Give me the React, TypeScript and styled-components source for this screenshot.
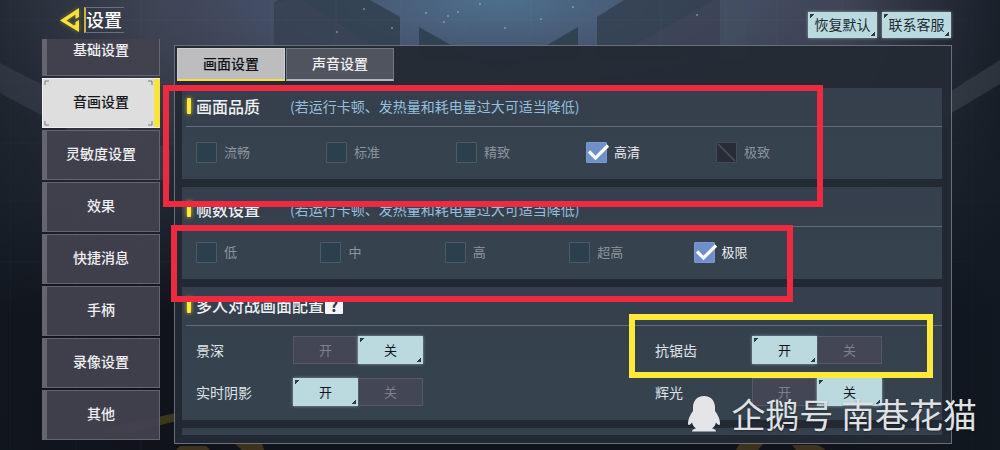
import React, { useState } from "react";
import styled, { createGlobalStyle, css } from "styled-components";

const GlobalStyle = createGlobalStyle`
  * { box-sizing: border-box; }
  body {
    margin: 0;
    background: #10131a;
    font-family: "Noto Sans CJK SC", "Noto Sans", sans-serif;
    color: #eef0f3;
  }
  button { font-family: inherit; cursor: pointer; }
`;

const Page = styled.div`
  position: relative;
  min-height: 100vh;
  padding: 0 48px 6px 42px;
  overflow: hidden;
`;

const Backdrop = styled.svg`
  position: absolute;
  inset: 0;
  width: 100%;
  height: 100%;
`;

const Header = styled.header`
  position: relative;
  display: flex;
  justify-content: space-between;
  height: 39px;
`;

const BackLink = styled.a`
  display: flex;
  align-items: center;
  align-self: flex-start;
  gap: 4px;
  margin: 7px 0 0 17px;
  color: #fff;
  text-decoration: none;
  svg { display: block; filter: drop-shadow(0 0 2px #d9b90088); }
`;

const Title = styled.h1`
  margin: 0;
  padding: 0 2px 0 0;
  height: 26px;
  font-size: 18px;
  line-height: 22px;
  font-weight: 500;
  border: 1px solid #6b707c;
  border-right: 0;
  border-left: 2px solid #cdb43a;
`;

const HeaderActions = styled.div`
  display: flex;
  align-items: flex-end;
  gap: 5px;
  padding: 0 1px 1px 0;
`;

const corners = css`
  background:
    linear-gradient(135deg, #2c3c42 3px, transparent 3px) 2px 2px / 5px 5px no-repeat,
    linear-gradient(315deg, #2c3c42 3px, transparent 3px) calc(100% - 2px) calc(100% - 2px) / 5px 5px no-repeat,
    #badadf;
  box-shadow: 0 0 3px #badadf99;
`;

const ActionButton = styled.button`
  ${corners}
  width: 69px;
  height: 26px;
  padding: 0 0 2px;
  border: 0;
  font-size: 14px;
  line-height: 24px;
  color: #1c2a31;
`;

const Main = styled.main`
  position: relative;
  display: grid;
  grid-template-columns: 118px minmax(0, 1fr);
  align-items: start;
  gap: 14px;
`;

const SideNav = styled.nav`
  overflow: hidden;
`;

const SideList = styled.div`
  display: flex;
  flex-direction: column;
  gap: 2px;
  margin-top: -13px;
`;

const SideItem = styled.button<{ $active?: boolean }>`
  position: relative;
  height: 50px;
  padding: 0 0 4px;
  font-size: 14px;
  font-weight: 500;
  color: #f0f0f3;
  background: linear-gradient(90deg, #656570 4px, #42414ef0 4px);
  border: 1px solid #65656f;
  ${(p) =>
    p.$active &&
    css`
      color: #16171a;
      background: linear-gradient(270deg, #fbe33d 5px, #dededf 5px);
      border: 1px solid #f0f0f0;
      border-right: 1px solid #fbe33d;
      svg { position: absolute; left: 1px; top: 1px; width: calc(100% - 7px); height: calc(100% - 2px); }
    `}
`;

const Panel = styled.section`
  min-width: 0;
  margin-top: 6px;
  padding: 2px 9px 8px 7px;
  background: #242a34f2;
  border: 1px solid #69707a;
`;

const Tabs = styled.div`
  display: flex;
  gap: 1px;
  margin: 0 0 7px -5px;
`;

const Tab = styled.button<{ $active?: boolean }>`
  width: 108px;
  height: 33px;
  padding: 0 0 2px;
  font-size: 14px;
  font-weight: 500;
  color: ${(p) => (p.$active ? "#101114" : "#f0f0f3")};
  background: ${(p) => (p.$active ? "#bdbdc0" : "#50545e")};
  border: 1px solid ${(p) => (p.$active ? "#cfcfd2" : "#747882")};
  border-bottom: 2px solid ${(p) => (p.$active ? "#f3df45" : "#b3b6bc")};
`;

const Sections = styled.div`
  display: flex;
  flex-direction: column;
  gap: 8px;
`;

const Group = styled.section`
  position: relative;
  min-height: 7px;
  background: linear-gradient(#363f4d, #36434e);
`;

const GroupHead = styled.header<{ $low?: boolean }>`
  display: flex;
  align-items: center;
  height: ${(p) => (p.$low ? 40 : 39)}px;
  margin-left: 4px;
  padding: ${(p) => (p.$low ? "4px 0 0" : "0 0 3px")};
  border-bottom: 1px solid #626c78;
`;

const GroupTitle = styled.h2`
  display: flex;
  align-items: center;
  margin: 0;
  font-size: 16px;
  line-height: 24px;
  font-weight: 500;
  &::before {
    content: "";
    width: 4px;
    height: 16px;
    margin: 0 5px 0 1px;
    border-radius: 1px;
    background: #ffe93a;
    box-shadow: 0 0 4px #d9bd10;
  }
`;

const Hint = styled.p`
  margin: 0 0 0 30px;
  font-size: 14px;
  line-height: 20px;
  color: #93bfdc;
`;

const HelpButton = styled.button`
  width: 18px;
  height: 18px;
  margin-left: 1px;
  padding: 0;
  border: 0;
  border-radius: 1px;
  background: #f2f3f4;
  color: #2b333d;
  font-size: 16px;
  font-weight: 700;
  line-height: 18px;
`;

const Options = styled.div<{ $tail: number }>`
  display: grid;
  grid-template-columns: repeat(5, minmax(0, 1fr));
  align-items: center;
  height: 52px;
  padding: 0 ${(p) => p.$tail}px 2px 14px;
`;

const OptionLabel = styled.label<{ $on: boolean }>`
  position: relative;
  display: flex;
  align-items: center;
  gap: 7px;
  font-size: 13px;
  line-height: 20px;
  color: ${(p) => (p.$on ? "#e9ecf0" : "#8d949e")};
`;

const OptionInput = styled.input`
  appearance: none;
  width: 21px;
  height: 21px;
  margin: 0;
  background: #2c3f4c;
  border: 1px solid #4c5a67;
  border-radius: 1px;
  &:checked { background: #6f8fcb; border-color: #7c99cf; }
  &:disabled { background: #272c36; border-color: #444b56; }
`;

const OptionMark = styled.svg`
  position: absolute;
  left: 0;
  top: 50%;
  width: 24px;
  height: 22px;
  margin-top: -11px;
  pointer-events: none;
`;

const Settings = styled.div`
  display: grid;
  grid-template-columns: 8fr 5fr;
  row-gap: 14px;
  padding: 10px 0 14px 14px;
`;

const SettingRow = styled.div`
  display: flex;
  align-items: center;
`;

const SettingName = styled.span`
  width: 97px;
  font-size: 14px;
  line-height: 20px;
  color: #dfe3e8;
`;

const Switch = styled.div`
  display: flex;
`;

const SwitchButton = styled.button<{ $on: boolean }>`
  width: 65px;
  height: 28px;
  padding: 0;
  font-size: 13px;
  line-height: 26px;
  color: #7d808e;
  background: #434654;
  border: 1px solid #555867;
  ${(p) =>
    p.$on &&
    css`
      ${corners}
      color: #10181c;
      border: 0;
    `}
`;

const Marker = styled.div<{ $box: [number, number, number, number]; $color: string }>`
  position: absolute;
  z-index: 2;
  top: ${(p) => p.$box[0]}px;
  right: ${(p) => p.$box[1]}px;
  height: ${(p) => p.$box[2]}px;
  left: ${(p) => p.$box[3]}px;
  border: 6px solid ${(p) => p.$color};
  pointer-events: none;
`;

const Watermark = styled.div`
  position: absolute;
  z-index: 3;
  right: 23px;
  bottom: 14px;
  display: flex;
  align-items: center;
  gap: 10px;
  font-size: 34px;
  line-height: 44px;
  color: #dfe1e4;
  text-shadow: 0 1px 2px #0006;
  pointer-events: none;
  svg { display: block; }
`;

const RED = "#ee2a41";
const YELLOW = "#ffe93a";

const navItems = ["基础设置", "音画设置", "灵敏度设置", "效果", "快捷消息", "手柄", "录像设置", "其他"];
const stars = [
  [480, 4, 1], [448, 16, 1], [458, 12, 1], [444, 22, 1], [541, 19, 1], [573, 7, 1],
  [364, 9, 1], [337, 32, 1], [426, 13, 1], [505, 28, 1], [392, 28, 1], [697, 15, 1],
];

function Scene() {
  return (
    <Backdrop viewBox="0 0 1000 450" preserveAspectRatio="none" aria-hidden="true">
      <defs>
        <linearGradient id="base" x1="0" y1="0" x2="0" y2="1">
          <stop offset="0" stopColor="#363b47" />
          <stop offset="0.45" stopColor="#1f2630" />
          <stop offset="0.7" stopColor="#11131b" />
          <stop offset="1" stopColor="#10131a" />
        </linearGradient>
        <radialGradient id="glow" cx="0.5" cy="0" r="0.6">
          <stop offset="0" stopColor="#4d708d" />
          <stop offset="0.3" stopColor="#475570" stopOpacity="0.95" />
          <stop offset="0.6" stopColor="#424659" stopOpacity="0.7" />
          <stop offset="1" stopColor="#3d4150" stopOpacity="0" />
        </radialGradient>
        <linearGradient id="edge" x1="0" y1="0" x2="1" y2="0">
          <stop offset="0" stopColor="#111922" stopOpacity="0.5" />
          <stop offset="0.15" stopColor="#111922" stopOpacity="0" />
          <stop offset="0.85" stopColor="#111922" stopOpacity="0" />
          <stop offset="1" stopColor="#111922" stopOpacity="0.8" />
        </linearGradient>
      </defs>
      <rect width="1000" height="450" fill="url(#base)" />
      <rect width="1000" height="320" fill="url(#glow)" />
      <path d="M274 3 278 0H370L400 17V60H274Z" fill="#2f3f4e" opacity="0.8" />
      <path d="M286 0H302L380 50H274V4Z" fill="#444759" opacity="0.3" />
      <path d="M419 27 500 73 578 27V60H419Z" fill="#2d3d4c" opacity="0.85" />
      <path d="M597 17 624 0H720V60H597Z" fill="#323f4f" opacity="0.8" />
      <path d="M625 50 714 0H720V60H625Z" fill="#444559" opacity="0.5" />
      <rect x="720" width="26" height="60" fill="#435060" opacity="0.4" />
      <g stroke="#8aa0b4" strokeOpacity="0.07">
        <path d="M10 0V450M76 0V450M141 0V450M206 0V60M271 0V60M336 0V60M401 0V60M466 0V60M531 0V60M596 0V60M661 0V60M726 0V60M777 0V60M842 0V60M907 0V60M972 0V450" />
        <path d="M0 20H1000M0 82H1000M0 143H1000M0 201H1000M0 262H1000" />
      </g>
      <rect width="1000" height="450" fill="url(#edge)" />
      <path d="M0 63 170 150V185L0 93Z" fill="#59616c" opacity="0.25" />
      <path d="M940 98 1000 60V84L940 120Z" fill="#5b626c" opacity="0.3" />
      <path d="M100 430 180 412V420L120 436Z" fill="#665b20" opacity="0.5" />
      <path d="M180 446H206L210 450H176ZM234 443H262L264 450H242ZM740 443H764L758 450H736ZM792 445H818L826 450H796Z" fill="#6a5321" opacity="0.5" />
      {stars.map(([x, y, r]) => (
        <circle key={`${x}-${y}`} cx={x} cy={y} r={r} fill="#9fc0d6" opacity="0.6" />
      ))}
    </Backdrop>
  );
}

function OptionGroup({ name, items, initial, disabled, tail }: {
  name: string; items: string[]; initial: string; disabled?: string; tail: number;
}) {
  const [value, setValue] = useState(initial);
  return (
    <Options $tail={tail} role="radiogroup" aria-label={name}>
      {items.map((item) => (
        <OptionLabel key={item} $on={value === item}>
          <OptionInput
            type="radio"
            name={name}
            checked={value === item}
            disabled={item === disabled}
            onChange={() => setValue(item)}
          />
          {value === item && (
            <OptionMark viewBox="0 0 24 22" aria-hidden="true">
              <path d="M3 10.500 9.500 17 22 4.500" fill="none" stroke="#fff" strokeWidth="3.200" />
            </OptionMark>
          )}
          {item === disabled && (
            <OptionMark viewBox="0 0 24 22" aria-hidden="true">
              <path d="M2 3 19 20" stroke="#4c535e" strokeWidth="1.500" />
            </OptionMark>
          )}
          {item}
        </OptionLabel>
      ))}
    </Options>
  );
}

function Setting({ name, initial }: { name: string; initial: boolean }) {
  const [on, setOn] = useState(initial);
  return (
    <SettingRow>
      <SettingName>{name}</SettingName>
      <Switch role="group" aria-label={name}>
        <SwitchButton type="button" $on={on} aria-pressed={on} onClick={() => setOn(true)}>开</SwitchButton>
        <SwitchButton type="button" $on={!on} aria-pressed={!on} onClick={() => setOn(false)}>关</SwitchButton>
      </Switch>
    </SettingRow>
  );
}

export default function App() {
  const [nav, setNav] = useState("音画设置");
  const [tab, setTab] = useState("画面设置");
  const hint = "(若运行卡顿、发热量和耗电量过大可适当降低)";
  return (
    <Page>
      <GlobalStyle />
      <Scene />
      <Header>
        <BackLink href="#back">
          <svg width="21" height="26" viewBox="0 0 21 26" aria-hidden="true">
            <path d="M20 1V10L16.500 12V7.500L7.500 13.500 15 18.500 16.500 17.500V15L20 13V25L1 13.500Z" fill="#f7e13c" />
          </svg>
          <Title>设置</Title>
        </BackLink>
        <HeaderActions>
          <ActionButton type="button">恢复默认</ActionButton>
          <ActionButton type="button">联系客服</ActionButton>
        </HeaderActions>
      </Header>
      <Main>
        <SideNav>
          <SideList>
            {navItems.map((item) => (
              <SideItem key={item} type="button" $active={nav === item} onClick={() => setNav(item)}>
                {item}
                {nav === item && (
                  <svg viewBox="0 0 110 46" preserveAspectRatio="none" aria-hidden="true">
                    <path d="M1 5V1H5M105 1H109V5M109 41V45H105M5 45H1V41" fill="none" stroke="#77797d" />
                  </svg>
                )}
              </SideItem>
            ))}
          </SideList>
        </SideNav>
        <Panel>
          <Tabs role="tablist">
            {["画面设置", "声音设置"].map((item) => (
              <Tab key={item} type="button" role="tab" aria-selected={tab === item} $active={tab === item} onClick={() => setTab(item)}>
                {item}
              </Tab>
            ))}
          </Tabs>
          <Sections>
            <Group>
              <GroupHead>
                <GroupTitle>画面品质</GroupTitle>
                <Hint>{hint}</Hint>
              </GroupHead>
              <OptionGroup name="画面品质" items={["流畅", "标准", "精致", "高清", "极致"]} initial="高清" disabled="极致" tail={96} />
              <Marker $color={RED} $box={[-3, 119, 122, -19]} />
            </Group>
            <Group>
              <GroupHead $low>
                <GroupTitle>帧数设置</GroupTitle>
                <Hint>{hint}</Hint>
              </GroupHead>
              <OptionGroup name="帧数设置" items={["低", "中", "高", "超高", "极限"]} initial="极限" tail={124} />
              <Marker $color={RED} $box={[38, 149, 77, -11]} />
            </Group>
            <Group>
              <GroupHead>
                <GroupTitle>多人对战画面配置</GroupTitle>
                <HelpButton type="button">?</HelpButton>
              </GroupHead>
              <Settings>
                <Setting name="景深" initial={false} />
                <Setting name="抗锯齿" initial={true} />
                <Setting name="实时阴影" initial={true} />
                <Setting name="辉光" initial={false} />
              </Settings>
              <Marker $color={YELLOW} $box={[27, 9, 64, 447]} />
            </Group>
            <Group />
          </Sections>
        </Panel>
      </Main>
      <Watermark>
        <svg width="34" height="36" viewBox="0 0 34 36" aria-hidden="true">
          <path d="M17 0C9.500 0 6 5.500 6 11.500V15C3 19 1 23.500 1 27C1 30 3 29.500 5 26.500C5.500 29 7 31 9 32.500C6 33 5 34 5 35.500H29C29 34 28 33 25 32.500C27 31 28.500 29 29 26.500C31 29.500 33 30 33 27C33 23.500 31 19 28 15V11.500C28 5.500 24.500 0 17 0Z" fill="#e3e5e8" />
        </svg>
        <span>企鹅号 南巷花猫</span>
      </Watermark>
    </Page>
  );
}
